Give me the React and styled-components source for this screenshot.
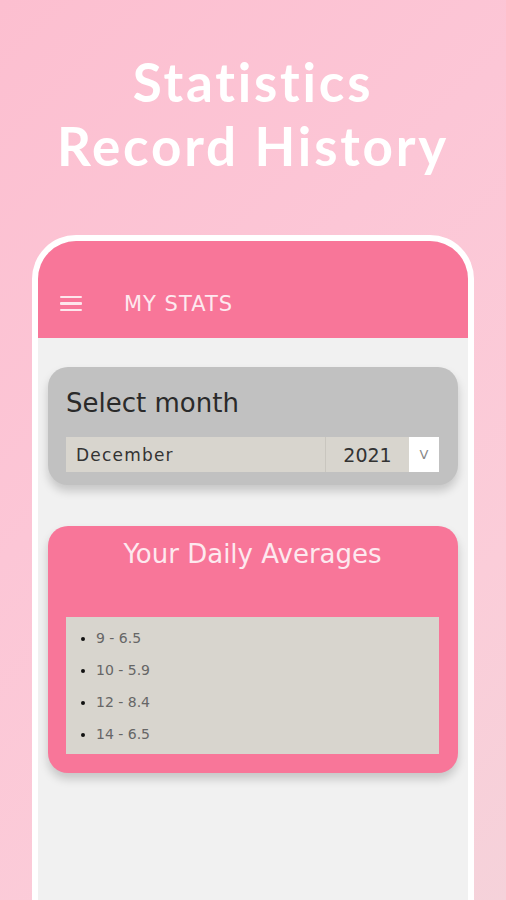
import styled, { createGlobalStyle } from "styled-components";

const GlobalStyle = createGlobalStyle`
  html, body {
    margin: 0;
    padding: 0;
  }
  body {
    font-family: "DejaVu Sans", "Noto Sans", sans-serif;
  }
`;

const Page = styled.div`
  width: 506px;
  height: 900px;
  overflow: hidden;
  display: flex;
  flex-direction: column;
  align-items: center;
  background: linear-gradient(135deg, #fcbfd0 0%, #fcc6d6 40%, #fbcdd9 75%, #f5d2da 100%);
`;

const Headline = styled.h1`
  margin: 50px 0 0;
  font-family: Lato, "Open Sans", sans-serif;
  font-weight: 700;
  font-size: 53px;
  line-height: 64px;
  letter-spacing: 2.8px;
  color: #ffffff;
  text-align: center;
`;

const Phone = styled.div`
  margin-top: 57px;
  width: 430px;
  flex: 1;
  border: 6px solid #ffffff;
  border-bottom: none;
  border-radius: 44px 44px 0 0;
  overflow: hidden;
  display: flex;
  flex-direction: column;
  background: #f1f1f1;
`;

const AppBar = styled.div`
  height: 97px;
  flex: none;
  background: #f87699;
  display: flex;
  align-items: center;
  padding: 28px 0 0 22px;
  box-sizing: border-box;
  gap: 42px;
`;

const Burger = styled.div`
  width: 22px;
  display: flex;
  flex-direction: column;
  gap: 4px;
  span {
    display: block;
    height: 2.5px;
    background: #fde6ec;
    border-radius: 1px;
  }
`;

const AppTitle = styled.div`
  font-size: 21px;
  color: #fde9ef;
  letter-spacing: 1px;
`;

const Content = styled.div`
  padding: 29px 10px 0 10px;
  display: flex;
  flex-direction: column;
  gap: 41px;
`;

const Card = styled.div`
  background: ${({ $bg }) => $bg};
  border-radius: 20px;
  box-shadow: 0 6px 10px rgba(0, 0, 0, 0.18);
  padding: ${({ $pad }) => $pad};
`;

const CardHeading = styled.div`
  font-size: ${({ $size }) => $size};
  color: ${({ $color }) => $color};
  text-align: ${({ $align }) => $align || "left"};
  line-height: 1.2;
`;

const SelectRow = styled.div`
  margin-top: 18px;
  display: flex;
  height: 35px;
`;

const Cell = styled.div`
  background: ${({ $bg }) => $bg || "#d8d5ce"};
  width: ${({ $w }) => $w};
  flex: ${({ $grow }) => ($grow ? 1 : "none")};
  display: flex;
  align-items: center;
  justify-content: ${({ $justify }) => $justify || "flex-start"};
  padding: ${({ $pad }) => $pad || "0"};
  box-sizing: border-box;
  font-size: ${({ $size }) => $size || "16px"};
  letter-spacing: ${({ $track }) => $track || "0"};
  color: ${({ $color }) => $color || "#333"};
  border-left: ${({ $divider }) => ($divider ? "1px solid #c9c6bf" : "none")};
`;

const ListBox = styled.ul`
  margin: 47px 0 0;
  background: #d8d5ce;
  padding: 5px 0 4px 30px;
  list-style: disc;
  li {
    font-size: 14px;
    line-height: 32px;
    color: #666;
  }
  li::marker {
    color: #111;
  }
`;

const averages = ["9 - 6.5", "10 - 5.9", "12 - 8.4", "14 - 6.5"];

export default function App() {
  return (
    <>
      <GlobalStyle />
      <Page>
        <Headline>
          Statistics
          <br />
          Record History
        </Headline>
        <Phone>
          <AppBar>
            <Burger>
              <span />
              <span />
              <span />
            </Burger>
            <AppTitle>MY STATS</AppTitle>
          </AppBar>
          <Content>
            <Card $bg="#c1c1c1" $pad="21px 19px 13px 18px">
              <CardHeading $size="26px" $color="#2a2a2a">
                Select month
              </CardHeading>
              <SelectRow>
                <Cell $grow $pad="0 0 0 10px" $size="17px" $track="1.2px">
                  December
                </Cell>
                <Cell $w="84px" $justify="center" $size="19px" $divider>
                  2021
                </Cell>
                <Cell $w="30px" $bg="#ffffff" $justify="center" $size="13px" $color="#888">
                  V
                </Cell>
              </SelectRow>
            </Card>
            <Card $bg="#f87699" $pad="13px 19px 19px 18px">
              <CardHeading $size="26px" $color="#fde9ef" $align="center">
                Your Daily Averages
              </CardHeading>
              <ListBox>
                {averages.map((a) => (
                  <li key={a}>{a}</li>
                ))}
              </ListBox>
            </Card>
          </Content>
        </Phone>
      </Page>
    </>
  );
}
